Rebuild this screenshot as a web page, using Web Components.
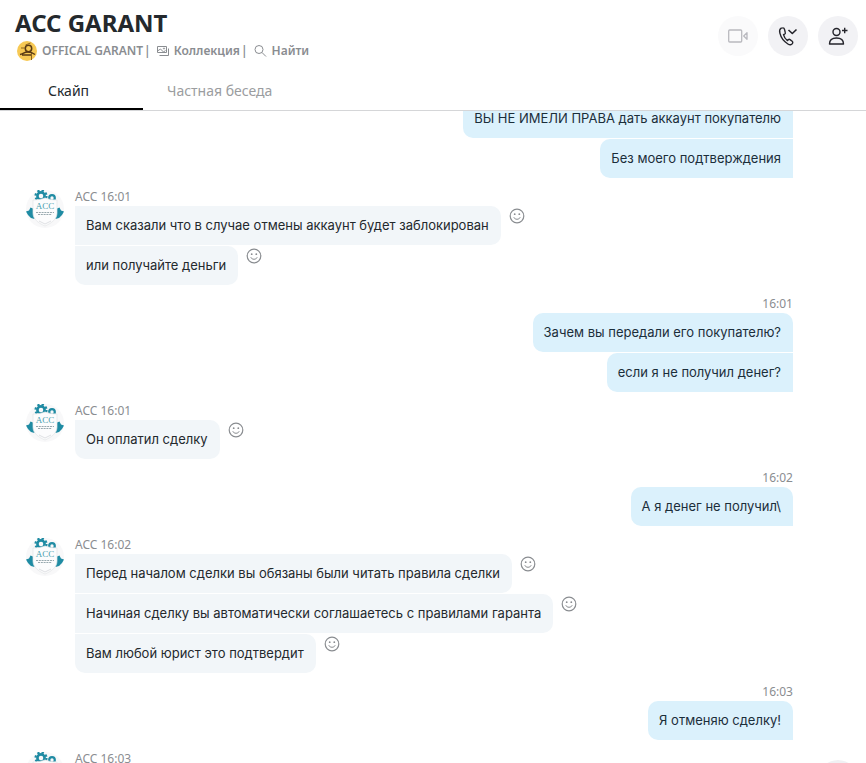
<!DOCTYPE html>
<html lang="ru">
<head>
<meta charset="utf-8">
<title>ACC GARANT</title>
<style>
  body {
    margin: 0;
    background: #fff;
    color: #24292d;
    font-family: "Noto Sans", "Open Sans", sans-serif;
    font-size: 14px;
  }
</style>
</head>
<body>
<chat-app>
  <chat-header slot="header" name="ACC GARANT" topic="OFFICAL GARANT"></chat-header>

  <message-group out>
    <chat-message out>ВЫ НЕ ИМЕЛИ ПРАВА дать аккаунт покупателю</chat-message>
    <chat-message out>Без моего подтверждения</chat-message>
  </message-group>
  <message-group label="ACC 16:01">
    <chat-message>Вам сказали что в случае отмены аккаунт будет заблокирован</chat-message>
    <chat-message>или получайте деньги</chat-message>
  </message-group>
  <message-group out label="16:01">
    <chat-message out>Зачем вы передали его покупателю?</chat-message>
    <chat-message out>если я не получил денег?</chat-message>
  </message-group>
  <message-group label="ACC 16:01">
    <chat-message>Он оплатил сделку</chat-message>
  </message-group>
  <message-group out label="16:02">
    <chat-message out>А я денег не получил\</chat-message>
  </message-group>
  <message-group label="ACC 16:02">
    <chat-message>Перед началом сделки вы обязаны были читать правила сделки</chat-message>
    <chat-message>Начиная сделку вы автоматически соглашаетесь с правилами гаранта</chat-message>
    <chat-message>Вам любой юрист это подтвердит</chat-message>
  </message-group>
  <message-group out label="16:03">
    <chat-message out>Я отменяю сделку!</chat-message>
  </message-group>
  <message-group label="ACC 16:03"></message-group>
</chat-app>

<script>
class ChatApp extends HTMLElement {
  constructor() {
    super();
    this.attachShadow({ mode: 'open' });
    this.shadowRoot.innerHTML = `
      <style>
        :host {
          display: flex;
          flex-direction: column;
          position: relative;
          height: 100vh;
          overflow: hidden;
        }
        main {
          flex: 1;
          min-height: 0;
          overflow: hidden;
          padding: 0 73px 0 26px;
        }
        ::slotted(message-group) {
          margin-bottom: 12px;
        }
        /* the list is scrolled a little under the header */
        ::slotted(message-group:first-of-type) {
          margin-top: -12px;
        }
        .down {
          position: absolute;
          right: 8px;
          bottom: -37px;
          width: 40px;
          height: 40px;
          border: none;
          border-radius: 50%;
          background: #f0f0f3;
        }
      </style>
      <slot name="header"></slot>
      <main><slot></slot></main>
      <button class="down" aria-label="Вниз"></button>
    `;
  }
}

class ChatHeader extends HTMLElement {
  constructor() {
    super();
    this.attachShadow({ mode: 'open' });
  }

  connectedCallback() {
    this.shadowRoot.innerHTML = `
      <style>
        :host {
          display: block;
          flex: none;
          border-bottom: 1px solid #d5d6d8;
        }
        .top {
          display: flex;
          justify-content: space-between;
          height: 72px;
          padding: 0 8px 0 15px;
          box-sizing: border-box;
        }
        h1 {
          margin: 7px 0 0;
          font-size: 24px;
          line-height: 32px;
          font-weight: 700;
        }
        .info {
          display: flex;
          align-items: center;
          height: 23px;
          font-size: 12px;
          font-weight: 600;
          color: #8a8d91;
          white-space: nowrap;
        }
        .info > svg {
          margin: 0 4px 0 1px;
        }
        .info a {
          display: flex;
          align-items: center;
          gap: 5px;
          color: inherit;
          text-decoration: none;
        }
        .sep {
          margin: 0 6px 0 1px;
        }
        .actions {
          display: flex;
          gap: 10px;
          padding-top: 16px;
        }
        .tabs {
          display: flex;
          height: 38px;
        }
        .tabs button {
          box-sizing: border-box;
          min-width: 143px;
          padding: 0 24px;
          border: none;
          border-bottom: 2px solid transparent;
          background: none;
          font: inherit;
          color: #9b9da0;
          text-align: left;
        }
        .tabs .active {
          padding-left: 48px;
          border-color: #000;
          color: #24292d;
        }
      </style>
      <div class="top">
        <div>
          <h1>${this.getAttribute('name')}</h1>
          <div class="info">
            <svg width="22" height="22" viewBox="0 0 22 22" fill="none">
              <circle cx="11" cy="11" r="10" fill="#f7c954"/>
              <circle cx="12.500" cy="8.500" r="3.200" stroke="#5a3a14" stroke-width="1.500"/>
              <path d="M5 8h4M9.500 5l5-2M15.500 13v7" stroke="#8a6220"/>
              <path d="M4 14.500c3-.5 4-2.500 8-2.500 3 0 5 1 7 2.500M6 15h9" stroke="#5a3a14" stroke-width="1.500"/>
            </svg>
            <span>${this.getAttribute('topic')}</span>
            <span class="sep">|</span>
            <a href="#gallery">
              <svg width="12" height="10" viewBox="0 0 12 10" fill="none" stroke="#8a8d91">
                <path d="M.5 6.500v-6h9v6zM2.500 9.500h9v-7M.5 5l3-2 3 3 2-1.500"/>
                <circle cx="7" cy="2.500" r=".6"/>
              </svg>
              Коллекция</a>
            <span class="sep">|</span>
            <a href="#find">
              <svg width="13" height="12" viewBox="0 0 13 12" fill="none" stroke="#8a8d91">
                <circle cx="5" cy="4.500" r="4"/>
                <path d="M8 7.500l4 4"/>
              </svg>
              Найти</a>
          </div>
        </div>
        <div class="actions">
          <round-button label="Видеозвонок" off>
            <svg width="20" height="14" viewBox="0 0 20 14" fill="none" stroke="#b9b9bf" stroke-width="1.300">
              <rect x=".7" y="1" width="13" height="12" rx="1"/>
              <path d="M15.700 7l3.300-3.300v6.600z" stroke-linejoin="round"/>
            </svg>
          </round-button>
          <round-button label="Звонок">
            <svg width="20" height="20" viewBox="0 0 20 20" fill="none" stroke="#24242b" stroke-width="1.400" stroke-linejoin="round">
              <path d="M3.200 2.200c-1.600.9-1.900 2.700-1.300 5 1 4.300 4.300 8.500 8 10.800 2 1.200 3.800 1 4.700-.8.400-.8.200-1.400-.4-1.900l-2.200-1.700c-.6-.4-1.200-.3-1.700.2l-.8.800C7.400 13.200 6 11 5.500 8.700l1.100-.5c.6-.3.900-.8.700-1.500L6.500 3.300c-.2-1-.9-1.500-1.800-1.400-.5 0-1 .1-1.500.3z"/>
              <path d="M10.500 4l3.800 3.500L18.500 3.500" stroke-width="1.600"/>
            </svg>
          </round-button>
          <round-button label="Добавить">
            <svg width="20" height="20" viewBox="0 0 20 20" fill="none" stroke="#24242b" stroke-width="1.400">
              <circle cx="8.500" cy="6" r="3.500"/>
              <path d="M1.500 18c0-4 3-6 7-6s7 2 7 6zM14 4.500h5.500M16.700 1.700v5.500" stroke-linejoin="round"/>
            </svg>
          </round-button>
        </div>
      </div>
      <nav class="tabs">
        <button class="active">Скайп</button>
        <button>Частная беседа</button>
      </nav>
    `;
  }
}

class RoundButton extends HTMLElement {
  constructor() {
    super();
    this.attachShadow({ mode: 'open' });
  }

  connectedCallback() {
    this.shadowRoot.innerHTML = `
      <style>
        :host {
          display: block;
        }
        button {
          display: flex;
          align-items: center;
          justify-content: center;
          width: 40px;
          height: 40px;
          padding: 0;
          border: none;
          border-radius: 50%;
          background: #f2f2f5;
        }
        :host([off]) button {
          background: #fafafb;
        }
      </style>
      <button aria-label="${this.getAttribute('label')}"><slot></slot></button>
    `;
  }
}

class MessageGroup extends HTMLElement {
  constructor() {
    super();
    this.attachShadow({ mode: 'open' });
  }

  connectedCallback() {
    const label = this.getAttribute('label');
    this.shadowRoot.innerHTML = `
      <style>
        :host {
          display: flex;
          gap: 10px;
        }
        :host([out]) {
          justify-content: flex-end;
        }
        .body {
          display: flex;
          flex-direction: column;
          align-items: flex-start;
          gap: 1px;
        }
        :host([out]) .body {
          align-items: flex-end;
        }
        .label {
          height: 15px;
          font-size: 12px;
          line-height: 14px;
          color: #8a8d91;
        }
        /* on the author's side only the outer corner of a run is rounded */
        ::slotted(chat-message) {
          --near-top: 0;
          --near-bottom: 0;
        }
        :host([out]) ::slotted(chat-message:first-of-type) {
          --near-top: 10px;
        }
        :host(:not([out])) ::slotted(chat-message:last-of-type) {
          --near-bottom: 10px;
        }
      </style>
      ${this.hasAttribute('out') ? '' : '<acc-avatar></acc-avatar>'}
      <div class="body">
        ${label ? `<div class="label">${label}</div>` : ''}
        <slot></slot>
      </div>
    `;
  }
}

class ChatMessage extends HTMLElement {
  constructor() {
    super();
    this.attachShadow({ mode: 'open' });
  }

  connectedCallback() {
    const out = this.hasAttribute('out');
    this.shadowRoot.innerHTML = `
      <style>
        :host {
          display: flex;
          align-items: flex-start;
          gap: 8px;
        }
        .bubble {
          padding: 9px 12px 10px 11px;
          font-family: Inter, "Noto Sans", sans-serif;
          font-size: 13px;
          line-height: 20px;
          border-radius: var(--near-top) 10px 10px var(--near-bottom);
          background: #f2f6f9;
        }
        :host([out]) .bubble {
          border-radius: 10px var(--near-top) var(--near-bottom) 10px;
          background: #dbf1fc;
          color: #1b2e3a;
        }
        button {
          display: block;
          width: 16px;
          height: 16px;
          margin-top: 2px;
          padding: 0;
          border: none;
          background: none;
        }
      </style>
      <div class="bubble"><slot></slot></div>
      ${out ? '' : `
      <button aria-label="Реакция">
        <svg width="16" height="16" viewBox="0 0 16 16" fill="none" stroke="#8a8d91">
          <circle cx="8" cy="8" r="6.800" stroke-width="1.200"/>
          <path d="M4.800 9.300c1 2.600 5.400 2.600 6.400 0"/>
          <circle cx="5.700" cy="6.200" r=".9" fill="#8a8d91" stroke="none"/>
          <circle cx="10.300" cy="6.200" r=".9" fill="#8a8d91" stroke="none"/>
        </svg>
      </button>`}
    `;
  }
}

class AccAvatar extends HTMLElement {
  constructor() {
    super();
    this.attachShadow({ mode: 'open' });
    this.shadowRoot.innerHTML = `
      <style>
        :host {
          display: block;
          flex: none;
          width: 39px;
          height: 39px;
        }
        svg {
          display: block;
        }
      </style>
      <svg width="39" height="39" viewBox="0 0 39 39" aria-hidden="true">
        <circle cx="19" cy="19" r="19" fill="#f8f8f9"/>
        <circle cx="15" cy="6" r="3.600" fill="none" stroke="#1f8ba3" stroke-width="2.600"/>
        <circle cx="15" cy="6" r="5.500" fill="none" stroke="#1f8ba3" stroke-width="2.200" stroke-dasharray="2.300 2"/>
        <circle cx="26" cy="8" r="2.800" fill="none" stroke="#1f8ba3" stroke-width="2.200"/>
        <path d="M0 21.500l3-1 1.500-3 2.500 1 3 7-1.500 3.500-3.500-1-3-3zM38 21.500l-3-1-1.500-3-2.500 1-3 7 1.500 3.500 3.500-1 3-3z" fill="#1f8ba3"/>
        <path d="M7 10c5 0 9-1 12-2 3 1 7 2 12 2v13c0 6-5 10-12 13-7-3-12-7-12-13z" fill="#fcfcfd" stroke="#e3e5e7" stroke-width=".7"/>
        <path d="M10 22.500h18M12 24.500h14" stroke="#97a8ae" stroke-dasharray="2 .8"/>
        <path d="M13 31l6 3 6-3" fill="none" stroke="#dfe1e4"/>
        <text x="19" y="19" text-anchor="middle" font-family="Liberation Serif, serif" font-size="9" fill="#479eae">ACC</text>
      </svg>
    `;
  }
}

customElements.define('acc-avatar', AccAvatar);
customElements.define('round-button', RoundButton);
customElements.define('chat-message', ChatMessage);
customElements.define('message-group', MessageGroup);
customElements.define('chat-header', ChatHeader);
customElements.define('chat-app', ChatApp);
</script>
</body>
</html>
